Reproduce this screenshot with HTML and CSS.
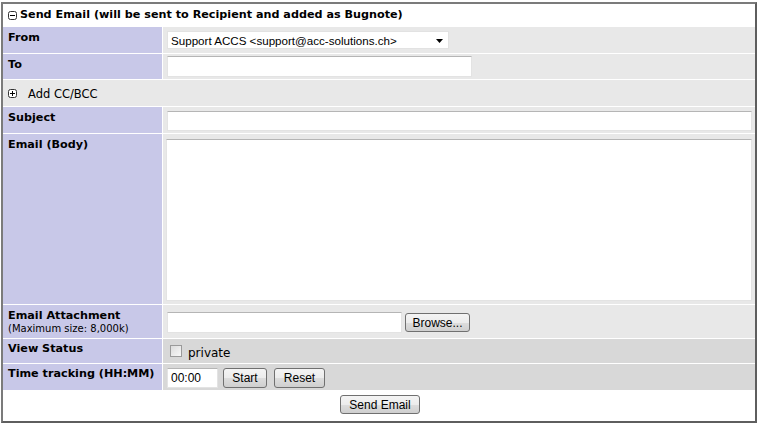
FILE: index.html
```html
<!DOCTYPE html>
<html>
<head>
<meta charset="utf-8">
<link rel="stylesheet" href="styles.css">
</head>
<body>
<div class="panel">
  <div class="title"><svg class="tog" width="9" height="9" viewBox="0 0 9 9"><rect x="0.5" y="0.5" width="8" height="8" rx="2" fill="#fff" stroke="#333"/><path d="M2 4.5h5" stroke="#000" stroke-width="1"/></svg>Send Email (will be sent to Recipient and added as Bugnote)</div>

  <div class="row h-from r1">
    <div class="cat">From</div>
    <div class="val"><div class="select"><span>Support ACCS &lt;support@acc-solutions.ch&gt;</span><svg width="7" height="4" viewBox="0 0 7 4"><path d="M0 0h7L3.5 4z" fill="#000"/></svg></div></div>
  </div>

  <div class="row h-to r1">
    <div class="cat">To</div>
    <div class="val"><input class="txt to" type="text"></div>
  </div>

  <div class="row-full h-cc r1">
    <svg class="tog" width="9" height="9" viewBox="0 0 9 9"><rect x="0.5" y="0.5" width="8" height="8" rx="2" fill="#fff" stroke="#333"/><path d="M2 4.5h5M4.5 2v5" stroke="#000" stroke-width="1"/></svg><span class="cc">Add CC/BCC</span>
  </div>

  <div class="row h-subj r1">
    <div class="cat">Subject</div>
    <div class="val"><input class="txt wide" type="text"></div>
  </div>

  <div class="row h-body r1">
    <div class="cat">Email (Body)</div>
    <div class="val"><textarea class="area"></textarea></div>
  </div>

  <div class="row h-att r1">
    <div class="cat">Email Attachment<div class="small">(Maximum size: 8,000k)</div></div>
    <div class="val"><input class="txt file" type="text"><button class="btn browse">Browse...</button></div>
  </div>

  <div class="row h-view r2">
    <div class="cat">View Status</div>
    <div class="val"><span class="check"></span><span class="priv">private</span></div>
  </div>

  <div class="row h-time r2">
    <div class="cat">Time tracking (HH:MM)</div>
    <div class="val"><input class="txt time" type="text" value="00:00"><button class="btn start">Start</button><button class="btn reset">Reset</button></div>
  </div>

  <div class="foot"><button class="btn send">Send Email</button></div>
</div>
</body>
</html>
```

FILE: styles.css
```css
html, body {
  margin: 0;
  padding: 0;
  background: #fff;
}
body {
  font-family: "DejaVu Sans", Verdana, sans-serif;
  font-size: 11px;
  color: #000;
}
.panel {
  margin: 2px 0 0 1px;
  width: 752px;
  border: 2px solid #7b7b7b;
  border-right-color: #5e5e5e;
  border-bottom-color: #5e5e5e;
  display: flex;
  flex-direction: column;
  gap: 1px;
  background: #fff;
}
.title {
  height: 22px;
  line-height: 22px;
  padding-left: 5px;
  font-weight: bold;
  font-size: 11.2px;
  display: flex;
  align-items: center;
  gap: 3px;
}
.tog {
  flex: none;
  display: block;
}
.row {
  display: grid;
  grid-template-columns: 159px 1fr;
  gap: 1px;
}
.r1 .val, .row-full.r1 { background: #e8e8e8; }
.r2 .val { background: #d8d8d8; }
.cat {
  background: #c8c8e8;
  font-weight: bold;
  font-size: 11.2px;
  padding: 4px 0 0 5px;
  line-height: 14px;
}
.small {
  font-weight: normal;
  font-size: 10px;
  line-height: 12px;
}
.val {
  display: flex;
  align-items: center;
  padding: 0 3px 0 4px;
}
.h-from { height: 26px; }
.h-to { height: 25px; }
.h-cc { height: 26px; }
.h-subj { height: 26px; }
.h-body { height: 170px; }
.h-att { height: 33px; }
.h-view { height: 24px; }
.h-time { height: 26px; }
.h-att .cat { padding-top: 4px; }
.h-view .cat, .h-time .cat { padding-top: 3px; }

.row-full {
  display: flex;
  align-items: center;
  padding-left: 5px;
  gap: 11px;
}
.cc { padding-top: 1px; font-size: 11.5px; }

.select {
  width: 272px;
  height: 16px;
  border: 1px solid #e2e2e2;
  background: #fff;
  display: flex;
  align-items: center;
  justify-content: space-between;
  padding: 0 5px 0 3px;
  box-sizing: content-box;
  font-family: "Liberation Sans", Arial, sans-serif;
  font-size: 11.6px;
}
.select svg { display: block; margin-top: 1px; }

.txt {
  box-sizing: border-box;
  border: 1px solid #e3e3e3;
  border-top-color: #b5b5b5;
  background: #fff;
  margin: 0;
  padding: 0 3px;
  font-family: "Liberation Sans", Arial, sans-serif;
  font-size: 12px;
  color: #000;
  outline: none;
}
.to { width: 305px; height: 21px; }
.wide { width: 585px; height: 20px; margin-top: 1px; }
.file { width: 235px; height: 21px; margin-top: 2px; }
.time { width: 51px; height: 20px; margin-top: 2px; }
.area {
  box-sizing: border-box;
  width: 586px;
  height: 162px;
  margin: 2px 0 0 -1px;
  border: 1px solid #e3e3e3;
  border-top-color: #b5b5b5;
  background: #fff;
  resize: none;
  outline: none;
}

.btn {
  box-sizing: border-box;
  margin: 0;
  padding: 0;
  border: 1px solid #707070;
  border-radius: 3px;
  background: linear-gradient(#f4f4f4 0%, #ececec 50%, #dddddd 51%, #cfcfcf 100%);
  font-family: "Liberation Sans", Arial, sans-serif;
  font-size: 12px;
  color: #000;
}
.browse { width: 65px; height: 19px; margin: 2px 0 0 3px; }
.start { width: 44px; height: 20px; margin: 2px 0 0 5px; }
.reset { width: 51px; height: 20px; margin: 2px 0 0 7px; }

.check {
  width: 10px;
  height: 10px;
  border: 1px solid #9a9a9a;
  background: linear-gradient(135deg, #dcdcdc, #f8f8f8);
  margin: 0 6px 0 3px;
  flex: none;
}
.priv { font-size: 12px; padding-top: 3px; }

.foot {
  height: 30px;
  display: flex;
  justify-content: center;
  align-items: center;
}
.send { width: 80px; height: 19px; margin-top: -3px; margin-left: 2px; }
```
